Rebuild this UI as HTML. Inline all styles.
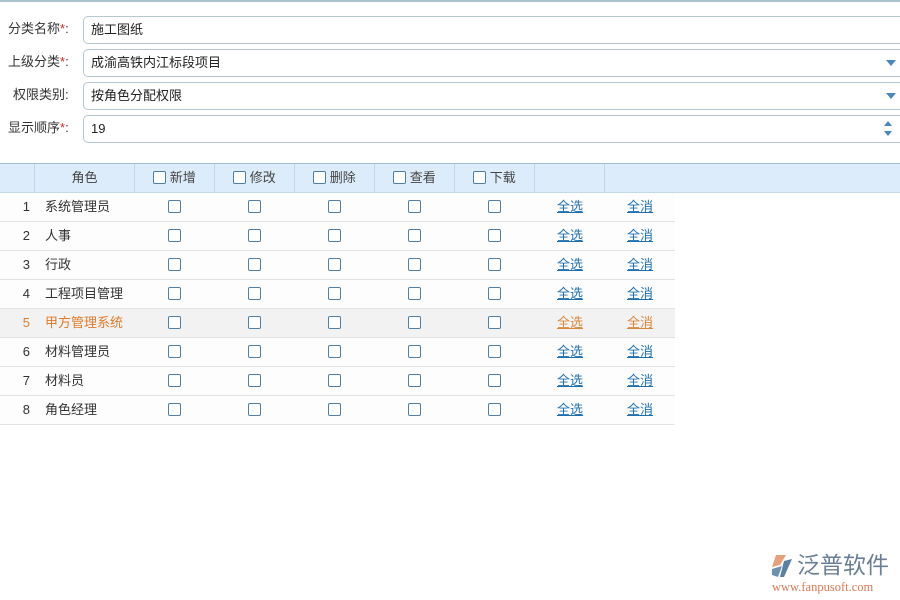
<!DOCTYPE html>
<html><head><meta charset="utf-8"><style>
*{margin:0;padding:0;box-sizing:border-box}
body{width:900px;height:600px;background:#fff;font-family:"Liberation Sans","Noto Sans CJK SC",sans-serif;font-size:13px;color:#333;position:relative;overflow:hidden}
.top{position:absolute;left:0;top:0;width:900px;height:2px;background:#a9c3cf}
.lab{position:absolute;left:8px;width:75px;font-size:13px;color:#333;line-height:18px}
.lab i{color:#d22;font-style:normal}
.inp{position:absolute;left:83px;width:830px;height:28px;border:1px solid #b5c8d2;border-radius:5px;padding:0 0 0 7px;line-height:26px;font-size:13px;color:#222;background:#fff}
.arr{position:absolute;right:4px;width:0;height:0;border-left:5px solid transparent;border-right:5px solid transparent;border-top:6px solid #4a86c0}
.hd{position:absolute;left:0;top:163px;width:900px;height:30px;background:#dcecfa;border-top:1px solid #9fbfd3;border-bottom:1px solid #c5d8e6}
.hc{position:absolute;top:0;height:28px;border-right:1px solid #c2d6e6;line-height:28px;text-align:center;color:#444}
.cb{display:inline-block;width:13px;height:13px;border:1px solid #4f7fa6;border-radius:2px;vertical-align:-2px;background:#fff}
.row{position:absolute;left:0;width:675px;height:29px;border-bottom:1px solid #e2e2e2;line-height:27px;background:#fdfdfd}
.row span{position:absolute;top:0}
.row .n{left:0;width:34px;text-align:right;padding-right:4px}
.row .r{left:45px}
.row .c{top:7px}
a{color:#1f6fae;text-decoration:underline}
.hl{background:#f2f2f2;color:#e07b2a}
.hl a{color:#d9883f}
</style></head><body>
<div class="top"></div>
<div class="lab" style="top:20px">分类名称<i>*</i>:</div>
<div class="inp" style="top:16px">施工图纸</div>
<div class="lab" style="top:53px">上级分类<i>*</i>:</div>
<div class="inp" style="top:49px">成渝高铁内江标段项目</div>
<div class="arr" style="left:886px;top:60px"></div>
<div class="lab" style="top:86px;left:13px">权限类别:</div>
<div class="inp" style="top:82px">按角色分配权限</div>
<div class="arr" style="left:886px;top:93px"></div>
<div class="lab" style="top:119px">显示顺序<i>*</i>:</div>
<div class="inp" style="top:115px">19</div>
<div style="position:absolute;left:884px;top:121px;border-left:4px solid transparent;border-right:4px solid transparent;border-bottom:5px solid #4a86c0"></div>
<div style="position:absolute;left:884px;top:131px;border-left:4px solid transparent;border-right:4px solid transparent;border-top:5px solid #4a86c0"></div>

<div class="hd">
<div class="hc" style="left:0;width:35px"></div>
<div class="hc" style="left:35px;width:100px">角色</div>
<div class="hc" style="left:135px;width:80px"><span class="cb"></span> 新增</div>
<div class="hc" style="left:215px;width:80px"><span class="cb"></span> 修改</div>
<div class="hc" style="left:295px;width:80px"><span class="cb"></span> 删除</div>
<div class="hc" style="left:375px;width:80px"><span class="cb"></span> 查看</div>
<div class="hc" style="left:455px;width:80px"><span class="cb"></span> 下载</div>
<div class="hc" style="left:535px;width:70px"></div>
</div>

<div id="rows"></div>
<script>
var names=["系统管理员","人事","行政","工程项目管理","甲方管理系统","材料管理员","材料员","角色经理"];
var h="";
names.forEach(function(n,i){
 var t=193+i*29;
 h+='<div class="row'+(i==4?' hl':'')+'" style="top:'+t+'px"><span class="n">'+(i+1)+'</span><span class="r">'+n+'</span>';
 [168,248,328,408,488].forEach(function(x){h+='<span class="c cb" style="left:'+x+'px"></span>';});
 h+='<span style="left:557px"><a>全选</a></span><span style="left:627px"><a>全消</a></span></div>';
});
document.getElementById("rows").innerHTML=h;
</script>

<div style="position:absolute;left:770px;top:553px;width:24px;height:26px">
<svg width="24" height="26" viewBox="0 0 24 26"><path d="M6 2 L16 2 L10 12 L2 14 Z" fill="#e8a07a"/><path d="M2 16 L12 13 L8 24 L2 22 Z" fill="#6d8fb0"/><path d="M14 8 L22 6 L14 24 L10 24 Z" fill="#5b7ea3"/></svg>
</div>
<div style="position:absolute;left:797px;top:552px;font-size:23px;color:#6a7f96;letter-spacing:0px;line-height:27px">泛普软件</div>
<div style="position:absolute;left:772px;top:580px;font-size:12.5px;color:#d97a55;font-family:'Liberation Serif',serif">www.fanpusoft.com</div>
</body></html>
